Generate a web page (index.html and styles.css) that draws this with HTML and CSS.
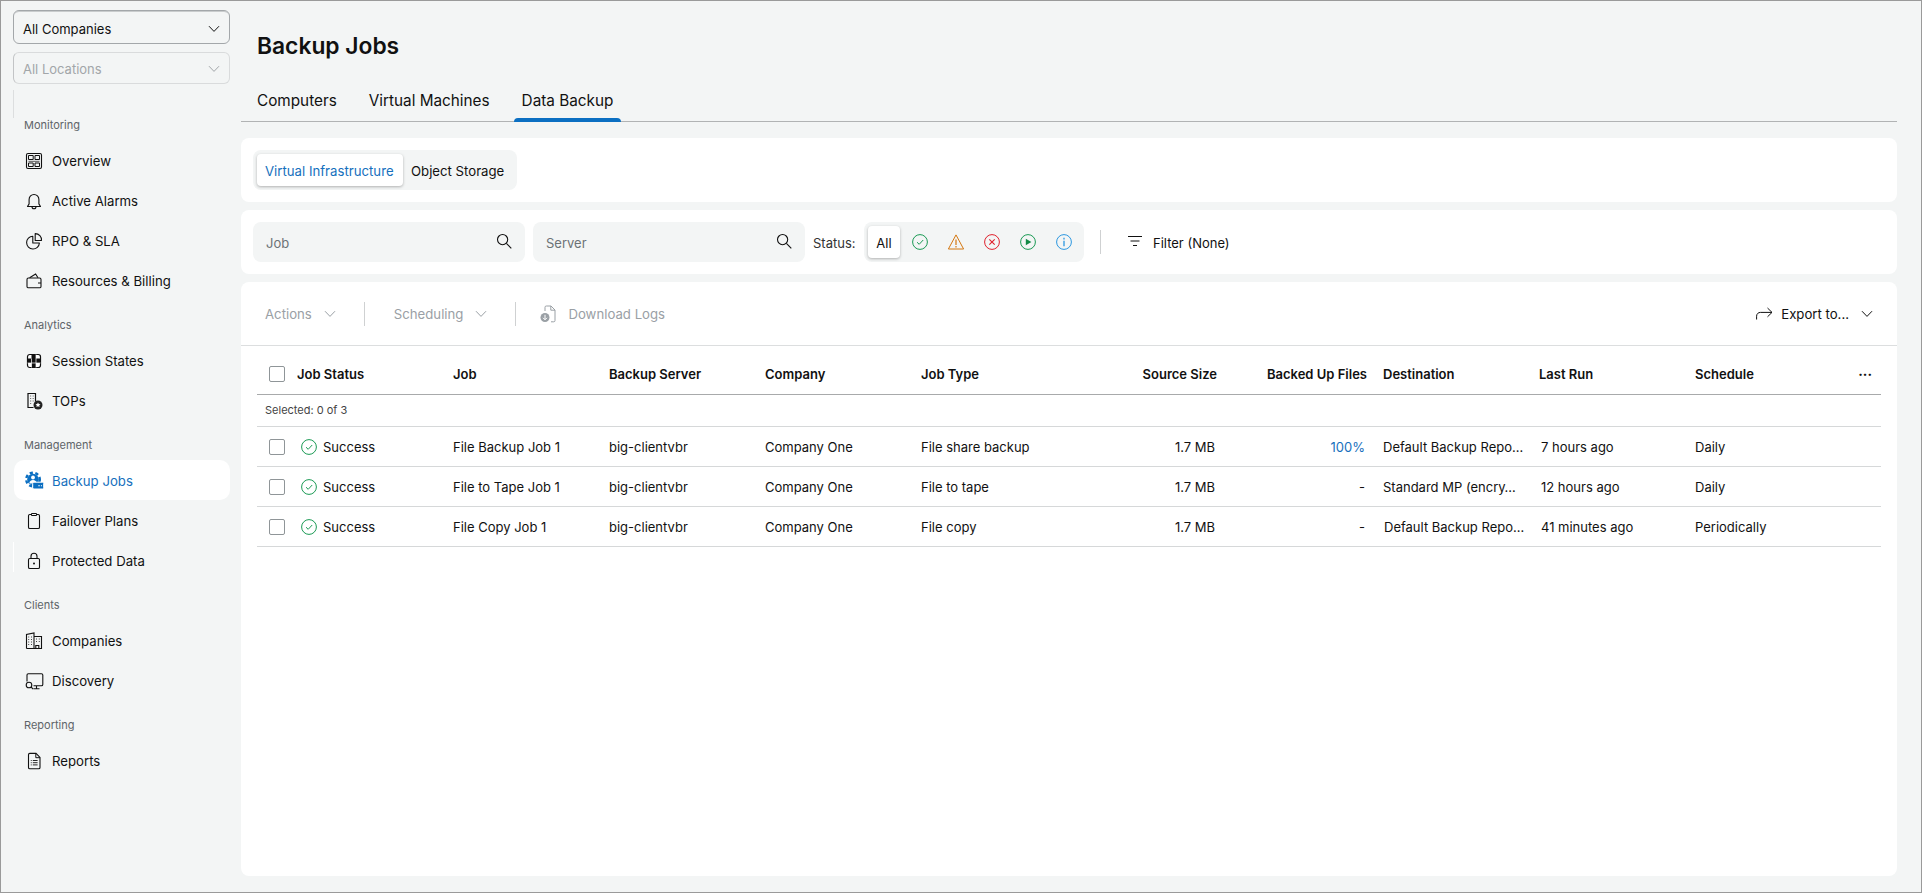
FILE: index.html
```html
<!DOCTYPE html>
<html lang="en">
<head>
<meta charset="utf-8">
<title>Backup Jobs</title>
<link rel="stylesheet" href="styles.css">
</head>
<body>
<svg class="defs" width="0" height="0" aria-hidden="true">
  <symbol id="chev" viewBox="0 0 12 8"><path d="M1 1.200 6 6.400l5-5.200" fill="none" stroke="currentColor" stroke-width="1"/></symbol>
  <symbol id="search" viewBox="0 0 16 16"><circle cx="6.600" cy="6.600" r="5.100" fill="none" stroke="currentColor" stroke-width="1.100"/><path d="m10.400 10.400 4.900 4.900" fill="none" stroke="currentColor" stroke-width="1.100"/></symbol>
  <symbol id="ok" viewBox="0 0 16 16"><circle cx="8" cy="8" r="7.400" fill="none" stroke="#1a9a54" stroke-width="1"/><path d="m5 8.200 2.200 2.100L11.200 6" fill="none" stroke="#1a9a54" stroke-width="1"/></symbol>
</svg>
<div class="app">
  <aside class="sidebar">
    <div class="select select-on"><span>All Companies</span><svg class="chev"><use href="#chev"/></svg></div>
    <div class="select select-off"><span>All Locations</span><svg class="chev"><use href="#chev"/></svg></div>
    <div class="side-spacer"></div>

    <div class="nav-label">Monitoring</div>
    <a class="nav-item"><svg class="nav-icon" viewBox="0 0 20 20"><rect x="2.500" y="2.500" width="15" height="15" rx="1.500" fill="none" stroke="#111" stroke-width="1.100"/><path d="M4.500 4.500h4.700v4H4.500zM11 4.500h4.500v4H11zM4.500 12h4.700v3.500H4.500zM11 12h4.500v3.500H11z" fill="none" stroke="#111"/><path d="M4.500 9.800h11v1.200h-11z" fill="#777"/></svg><span>Overview</span></a>
    <a class="nav-item"><svg class="nav-icon" viewBox="0 0 20 20"><path d="M3.500 15.500h13l-1.600-2.600V8.400a4.900 4.900 0 0 0-9.800 0v4.500z" fill="none" stroke="#111" stroke-width="1.100" stroke-linejoin="round"/><path d="M8 15.800a2 2 0 0 0 4 0" fill="none" stroke="#111" stroke-width="1.100"/></svg><span>Active Alarms</span></a>
    <a class="nav-item"><svg class="nav-icon" viewBox="0 0 20 20"><path d="M8.800 5.200a6.400 6.400 0 1 0 6.600 6.800H8.800z" fill="none" stroke="#111" stroke-width="1.100" stroke-linejoin="round"/><path d="M11.200 2.600a6.300 6.300 0 0 1 6.300 6.900h-6.300z" fill="none" stroke="#111" stroke-width="1.100" stroke-linejoin="round"/></svg><span>RPO &amp; SLA</span></a>
    <a class="nav-item"><svg class="nav-icon" viewBox="0 0 20 20"><rect x="3" y="7" width="14" height="9.800" rx="1.400" fill="none" stroke="#111" stroke-width="1.100"/><path d="m5.600 6.800 6-3.800 2.400 3.800M14 12h3" fill="none" stroke="#111" stroke-width="1.100"/></svg><span>Resources &amp; Billing</span></a>

    <div class="nav-label nav-label-next">Analytics</div>
    <a class="nav-item"><svg class="nav-icon" viewBox="0 0 20 20"><rect x="3.500" y="3.500" width="13" height="13" rx="2.200" fill="#fff" stroke="#111" stroke-width="1.200"/><path d="M3.500 7.500h4v4.500h-4zM7.500 3.500H12v4H7.500zM12 7.500h4.500V12H12zM7.500 12H12v4.500H7.500zM7.500 7.500H12V12H7.500z" fill="#111"/><path d="M7.500 7.500v9M12 3.500v13M3.500 12h13" fill="none" stroke="#fff" stroke-width=".7"/></svg><span>Session States</span></a>
    <a class="nav-item"><svg class="nav-icon" viewBox="0 0 20 20"><path d="M9.500 16.500H4V2.500h7.500v8" fill="none" stroke="#111" stroke-width="1.200"/><path d="M6 5h1.200M8.600 5h1.200M6 7.500h1.200M8.600 7.500h1.200M6 10h1.200M8.600 10h1.200M6 12.500h1.200" stroke="#777" stroke-width="1.100"/><circle cx="14" cy="14" r="4.500" fill="#222"/><path d="m14 11.500.8 1.600 1.700.2-1.300 1.100.4 1.700-1.600-.9-1.600.9.400-1.700-1.300-1.100 1.700-.2z" fill="#fff"/></svg><span>TOPs</span></a>

    <div class="nav-label nav-label-next">Management</div>
    <a class="nav-item nav-item-active"><svg class="nav-icon" viewBox="0 0 20 20"><circle cx="9" cy="8.500" r="5.800" fill="#0b6fc2"/><circle cx="9" cy="8.500" r="6.800" fill="none" stroke="#0b6fc2" stroke-width="2.400" stroke-dasharray="3.200 2.500"/><circle cx="9" cy="6.500" r="1.900" fill="#fff"/><path d="M5.300 12.500c0-2.200 1.700-3.400 3.700-3.400s3.700 1.200 3.700 3.400z" fill="#fff"/><rect x="8.700" y="11.200" width="11" height="6.800" rx="1.200" fill="#0b6fc2" stroke="#fff" stroke-width="1"/><path d="M14.300 14.700h1.500M16.900 14.700h1.100" stroke="#fff" stroke-width="1.100"/></svg><span>Backup Jobs</span></a>
    <a class="nav-item"><svg class="nav-icon" viewBox="0 0 20 20"><path d="M7.500 3.500H5.800A1.300 1.300 0 0 0 4.500 4.800v11.400a1.300 1.300 0 0 0 1.300 1.300h8.400a1.300 1.300 0 0 0 1.300-1.300V4.800a1.300 1.300 0 0 0-1.300-1.300h-1.700" fill="none" stroke="#111" stroke-width="1.100"/><path d="M7.500 2.500h5v2h-5z" fill="none" stroke="#111" stroke-width="1"/></svg><span>Failover Plans</span></a>
    <a class="nav-item nav-item-edge"><svg class="nav-icon" viewBox="0 0 20 20"><rect x="4.500" y="7.500" width="11" height="10" rx="1.300" fill="none" stroke="#111" stroke-width="1.100"/><path d="M7 7.500V5.200a3 3 0 0 1 6 0v2.300" fill="none" stroke="#111" stroke-width="1.100"/><circle cx="10" cy="12.500" r="1" fill="#111"/></svg><span>Protected Data</span></a>

    <div class="nav-label nav-label-next">Clients</div>
    <a class="nav-item"><svg class="nav-icon" viewBox="0 0 20 20"><path d="M2.500 17.500V3.500L10 2v15.500M10 5.500h7.500v12h-15M11.800 17.500v-3h3v3" fill="none" stroke="#111" stroke-width="1.100"/><path d="M4.200 6h1M7 6h1M4.200 8.500h1M7 8.500h1M4.200 11h1M7 11h1M4.200 13.500h1M7 13.500h1M12 8h1M14.800 8h1M12 10.500h1M14.800 10.500h1" stroke="#444" stroke-width="1"/></svg><span>Companies</span></a>
    <a class="nav-item"><svg class="nav-icon" viewBox="0 0 20 20"><path d="M3 10.500V4a1.300 1.300 0 0 1 1.300-1.300h13.200A1.300 1.300 0 0 1 18.800 4v9.400a1.300 1.300 0 0 1-1.300 1.300H9.500M12.500 14.700v3M9.500 17.700h6" fill="none" stroke="#111" stroke-width="1.100"/><circle cx="5" cy="14" r="2.800" fill="none" stroke="#111" stroke-width="1.100"/><path d="m7 16 2.200 2.200" stroke="#111" stroke-width="1.100"/></svg><span>Discovery</span></a>

    <div class="nav-label nav-label-next">Reporting</div>
    <a class="nav-item"><svg class="nav-icon" viewBox="0 0 20 20"><path d="M4.500 3.700A1.300 1.300 0 0 1 5.800 2.400h6.200l4 4v10a1.300 1.300 0 0 1-1.300 1.300H5.800a1.300 1.300 0 0 1-1.300-1.300z" fill="none" stroke="#111" stroke-width="1.100"/><path d="M11.800 2.500v4.200H16" fill="none" stroke="#111" stroke-width="1"/><path d="M6.800 9.500h.9M8.800 9.500h4.800M6.800 11.700h.9M8.800 11.700h4.800M6.800 13.900h.9M8.800 13.900h4.800" stroke="#111" stroke-width=".9"/></svg><span>Reports</span></a>
  </aside>

  <main class="main">
    <h1 class="title">Backup Jobs</h1>
    <nav class="tabs">
      <a class="tab">Computers</a>
      <a class="tab">Virtual Machines</a>
      <a class="tab tab-active">Data Backup</a>
    </nav>

    <section class="card card-seg">
      <div class="seg">
        <a class="seg-item seg-item-active">Virtual Infrastructure</a>
        <a class="seg-item">Object Storage</a>
      </div>
    </section>

    <section class="card card-filter">
      <div class="field"><span>Job</span><svg class="search"><use href="#search"/></svg></div>
      <div class="field"><span>Server</span><svg class="search"><use href="#search"/></svg></div>
      <span class="status-label">Status:</span>
      <div class="status-seg">
        <a class="status-all">All</a>
        <a class="status-btn"><svg class="status-icon"><use href="#ok"/></svg></a>
        <a class="status-btn"><svg class="status-icon" viewBox="0 0 16 16"><path d="M8 .9 15.600 15H.4z" fill="none" stroke="#d4760f" stroke-width="1" stroke-linejoin="round"/><path d="M8 5.500v5.500M8 12v1.400" stroke="#d4760f" stroke-width="1.200"/></svg></a>
        <a class="status-btn"><svg class="status-icon" viewBox="0 0 16 16"><circle cx="8" cy="8" r="7.400" fill="none" stroke="#e0202c" stroke-width="1"/><path d="m5.300 5.300 5.400 5.400m0-5.400-5.400 5.400" stroke="#e0202c" stroke-width="1.100"/></svg></a>
        <a class="status-btn"><svg class="status-icon" viewBox="0 0 16 16"><circle cx="8" cy="8" r="7.400" fill="none" stroke="#1a9a54" stroke-width="1"/><path d="M5.800 4.800 11.400 8l-5.600 3.200z" fill="#128a46"/></svg></a>
        <a class="status-btn"><svg class="status-icon" viewBox="0 0 16 16"><circle cx="8" cy="8" r="7.400" fill="none" stroke="#2b97e0" stroke-width="1"/><path d="M8 6.800v5.400M8 3.800v1.600" stroke="#2b97e0" stroke-width="1.300"/></svg></a>
      </div>
      <span class="vrule vrule-filter"></span>
      <a class="filter-btn"><svg class="filter-icon" viewBox="0 0 14 10"><path d="M0 .5h14M2.500 5h9M5 9.500h4" stroke="#111" stroke-width="1"/></svg><span>Filter (None)</span></a>
    </section>

    <section class="card card-table">
      <div class="toolbar">
        <a class="tool tool-off">Actions<svg class="chev chev-tool"><use href="#chev"/></svg></a>
        <span class="vrule vrule-a"></span>
        <a class="tool tool-off">Scheduling<svg class="chev chev-tool"><use href="#chev"/></svg></a>
        <span class="vrule vrule-b"></span>
        <a class="tool tool-off tool-logs"><svg class="logs-icon" viewBox="0 0 16 18"><path d="M5 6V2.300A1.300 1.300 0 0 1 6.300 1h4.700l4 4v10.500a1.300 1.300 0 0 1-1.300 1.300H11" fill="none" stroke="#9aa0a5" stroke-width="1"/><path d="M10.800 1v4.200H15" fill="none" stroke="#9aa0a5"/><circle cx="5" cy="12.500" r="4.500" fill="#9aa0a5"/><path d="M5 9.800v4.800M3 12.800l2 2 2-2" fill="none" stroke="#fff" stroke-width="1"/></svg>Download Logs</a>
        <a class="tool tool-export"><svg class="export-icon" viewBox="0 0 17 13"><path d="M.6 12.500V9.200C.6 6.800 2.300 5.400 4.500 5.400H16M11.500 1l4.500 4.400-4.500 4.400" fill="none" stroke="#111" stroke-width="1"/></svg>Export to...<svg class="chev chev-export"><use href="#chev"/></svg></a>
      </div>
      <table class="grid">
        <colgroup>
          <col class="c-check"><col class="c-std"><col class="c-std"><col class="c-std"><col class="c-std"><col class="c-std"><col class="c-num"><col class="c-num"><col class="c-std"><col class="c-std"><col class="c-std"><col class="c-more">
        </colgroup>
        <thead>
          <tr>
            <th class="cell-check"><span class="box"></span></th>
            <th>Job Status</th><th>Job</th><th>Backup Server</th><th>Company</th><th>Job Type</th>
            <th class="num">Source Size</th><th class="num">Backed Up Files</th>
            <th class="pad">Destination</th><th class="pad">Last Run</th><th class="pad">Schedule</th>
            <th class="more">···</th>
          </tr>
        </thead>
        <tbody>
          <tr class="selected-row"><td colspan="12">Selected: 0 of 3</td></tr>
          <tr>
            <td class="cell-check"><span class="box"></span></td>
            <td><span class="state"><svg class="state-icon"><use href="#ok"/></svg>Success</span></td>
            <td>File Backup Job 1</td><td>big-clientvbr</td><td>Company One</td><td>File share backup</td>
            <td class="num num-cell">1.7 MB</td><td class="num num-cell link">100%</td>
            <td class="pad">Default Backup Repo…</td><td class="pad pad-run">7 hours ago</td><td class="pad">Daily</td><td></td>
          </tr>
          <tr>
            <td class="cell-check"><span class="box"></span></td>
            <td><span class="state"><svg class="state-icon"><use href="#ok"/></svg>Success</span></td>
            <td>File to Tape Job 1</td><td>big-clientvbr</td><td>Company One</td><td>File to tape</td>
            <td class="num num-cell">1.7 MB</td><td class="num num-cell">-</td>
            <td class="pad">Standard MP (encry…</td><td class="pad pad-run">12 hours ago</td><td class="pad">Daily</td><td></td>
          </tr>
          <tr>
            <td class="cell-check"><span class="box"></span></td>
            <td><span class="state"><svg class="state-icon"><use href="#ok"/></svg>Success</span></td>
            <td>File Copy Job 1</td><td>big-clientvbr</td><td>Company One</td><td>File copy</td>
            <td class="num num-cell">1.7 MB</td><td class="num num-cell">-</td>
            <td class="pad pad-dest">Default Backup Repo…</td><td class="pad pad-run">41 minutes ago</td><td class="pad">Periodically</td><td></td>
          </tr>
        </tbody>
      </table>
    </section>
  </main>
</div>
</body>
</html>
```

FILE: styles.css
```css
* { box-sizing: border-box; }
html, body { margin: 0; height: 100%; }
body {
  font-family: Inter, "Liberation Sans", sans-serif;
  font-size: 13px;
  color: #111;
  background: #f3f5f5;
  overflow: hidden;
}
a { color: inherit; text-decoration: none; }
.defs { position: absolute; }

.app {
  display: flex;
  height: 893px;
  border: 1px solid #9a9a9a;
  background: #f3f5f5;
}

/* Sidebar */
.sidebar {
  width: 239px;
  flex: none;
  padding: 9px 9px 0 12px;
  display: flex;
  flex-direction: column;
}
.select {
  display: flex;
  align-items: center;
  justify-content: space-between;
  width: 217px;
  padding: 0 9px;
  border-radius: 6px;
  flex: none;
}
.select-on {
  height: 34px;
  padding-top: 3px;
  border: 1px solid #a3a7aa;
  box-shadow: inset 0 2px 0 -1px #c9cccd;
}
.select-off {
  height: 32px;
  margin-top: 8px;
  padding-top: 1px;
  border: 1px solid #d9dbdc;
  border-left-color: #c2c4c6;
  color: #a2a6a9;
}
.chev { width: 12px; height: 8px; flex: none; }
.side-spacer { height: 28px; margin: 6px 0 -10px; width: 1px; background: #dcdedf; flex: none; }
.nav-label {
  height: 32px;
  flex: none;
  margin-left: 1px;
  padding: 2px 0 0 10px;
  display: flex;
  align-items: center;
  font-size: 11px;
  color: #5e6468;
}
.nav-label-next { margin-top: 8px; }
.nav-item {
  position: relative;
  height: 40px;
  flex: none;
  margin-left: 1px;
  width: 216px;
  padding: 1px 0 0 10px;
  display: flex;
  align-items: center;
  gap: 8px;
  border-radius: 10px;
  font-size: 13.2px;
}
.nav-icon { width: 20px; height: 20px; flex: none; }
.nav-item-active { background: #fff; color: #1670bd; }
.nav-item-edge::before {
  content: "";
  position: absolute;
  left: -1px;
  top: 2px;
  height: 30px;
  width: 1px;
  background: #fff;
}

/* Main */
.main {
  flex: 1;
  min-width: 0;
  padding: 0 24px 16px 1px;
  display: flex;
  flex-direction: column;
}
.title {
  margin: 0 0 0 16px;
  height: 88px;
  padding-top: 30px;
  font-size: 22.8px;
  line-height: 30px;
  font-weight: 600;
  flex: none;
}
.tabs {
  display: flex;
  gap: 16px;
  height: 33px;
  padding-left: 8px;
  border-bottom: 1px solid #b1b3b4;
  flex: none;
}
.tab {
  padding: 0 8px;
  height: 33px;
  font-size: 15.3px;
  line-height: 24px;
  position: relative;
}
.tab-active::after {
  content: "";
  position: absolute;
  left: 0;
  right: 0;
  bottom: 0;
  height: 4px;
  background: #0b6fc2;
  border-radius: 4px 4px 0 0;
}
.card {
  background: #fff;
  border-radius: 8px;
  flex: none;
}
.card-seg { margin-top: 16px; height: 64px; padding: 12px; }
.seg {
  display: flex;
  width: 264px;
  height: 40px;
  padding: 4px;
  gap: 8px;
  background: #f3f5f5;
  border-radius: 8px;
  white-space: nowrap;
  font-size: 13.2px;
}
.seg-item { height: 32px; line-height: 34px; }
.seg-item-active {
  padding: 0 8px;
  width: 146px;
  background: #fff;
  color: #1670bd;
  border-radius: 4px;
  box-shadow: 0 1px 3px rgba(0, 0, 0, .28);
}
.card-filter {
  margin-top: 8px;
  height: 64px;
  padding: 12px;
  display: flex;
  align-items: center;
}
.field {
  width: 272px;
  height: 40px;
  padding: 1px 13px 0;
  margin-right: 8px;
  display: flex;
  align-items: center;
  justify-content: space-between;
  background: #f3f5f5;
  border-radius: 8px;
  color: #6c7276;
}
.search { width: 16px; height: 16px; color: #111; margin-top: -3px; flex: none; }
.status-label { width: 51px; padding-top: 1px; color: #333; }
.status-seg {
  width: 220px;
  height: 40px;
  padding: 4px;
  display: flex;
  background: #f3f5f5;
  border-radius: 8px;
}
.status-all {
  width: 32px;
  height: 32px;
  line-height: 34px;
  text-align: center;
  background: #fff;
  border-radius: 4px;
  box-shadow: 0 1px 3px rgba(0, 0, 0, .28);
}
.status-btn { width: 36px; display: flex; justify-content: center; align-items: center; padding-left: 4px; margin-top: -1px; }
.status-icon { width: 16px; height: 16px; }
.vrule { width: 1px; height: 24px; background: #cfd1d2; flex: none; }
.vrule-filter { margin-left: 16px; }
.filter-btn { margin-left: 27px; padding-top: 1px; display: flex; align-items: center; gap: 11px; }
.filter-icon { width: 14px; height: 10px; margin-top: -3px; }

/* Table card */
.card-table { flex: 1; margin-top: 8px; }
.toolbar {
  height: 64px;
  border-bottom: 1px solid #dcdedf;
  padding: 0 24px 0 24px;
  display: flex;
  align-items: center;
  font-size: 13.2px;
}
.tool { display: flex; align-items: center; }
.tool-off { color: #9aa0a5; }
.chev-tool { margin-left: 12px; }
.vrule-a { margin: 0 29px 0 28px; }
.vrule-b { margin: 0 24px 0 28px; }
.logs-icon { width: 16px; height: 18px; margin-right: 12px; }
.tool-export { margin-left: auto; }
.export-icon { width: 17px; height: 13px; margin-right: 8px; }
.chev-export { margin-left: 12px; }

.grid {
  table-layout: fixed;
  border-collapse: collapse;
  width: 1624px;
  margin-left: 16px;
}
.c-check { width: 40px; }
.c-std { width: 156px; }
.c-num { width: 150px; }
.c-more { width: 36px; }
.grid th, .grid td { padding: 0; text-align: left; white-space: nowrap; }
.grid th { height: 48px; padding-top: 8px; font-weight: 600; border-bottom: 1px solid #a8aaab; }
.grid td { height: 40px; padding-top: 1px; border-bottom: 1px solid #d6d8d9; }
.grid .selected-row td { height: 32px; padding-top: 0; font-size: 11px; color: #444; padding-left: 8px; }
.grid .cell-check { padding-left: 12px; }
.box {
  display: block;
  width: 16px;
  height: 16px;
  border: 1px solid #8f9598;
  border-radius: 2px;
  background: #fff;
}
.state { display: flex; align-items: center; gap: 6px; padding-left: 4px; }
.state-icon { width: 16px; height: 16px; flex: none; }
.grid .num { text-align: right; padding-right: 10px; }
.grid .num-cell { padding-right: 12px; }
.grid .pad { padding-left: 6px; }
.grid .pad-run { padding-left: 8px; }
.grid .pad-dest { padding-left: 7px; }
.grid .more { text-align: right; padding-right: 9px; font-weight: 800; }
.link { color: #1670bd; }
```
